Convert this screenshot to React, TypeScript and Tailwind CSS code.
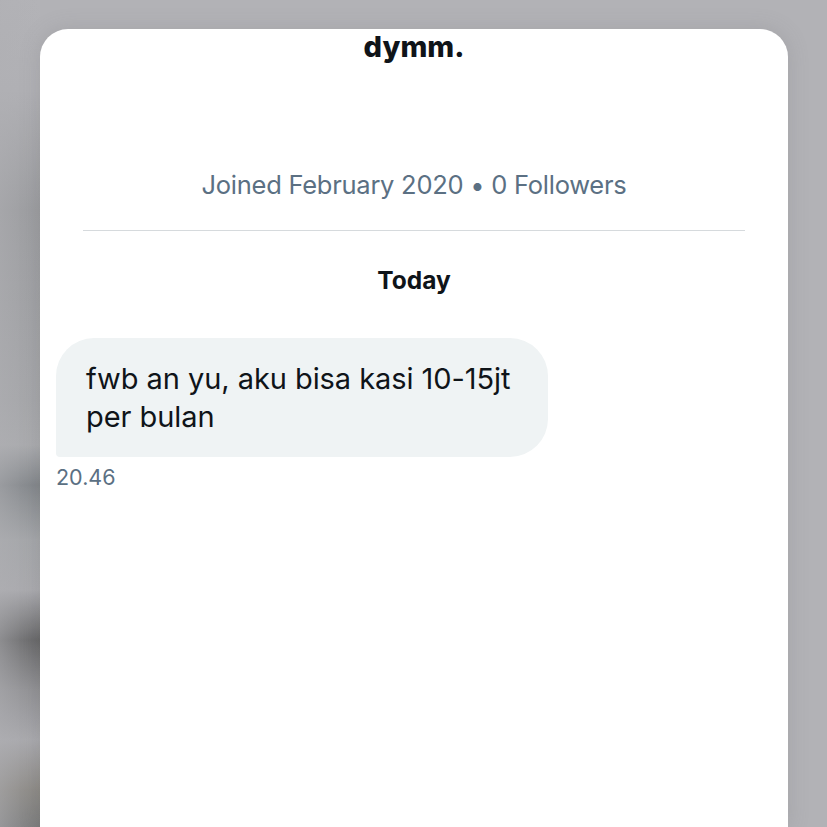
export default function App() {
  return (
    <div className="flex h-[827px] overflow-hidden bg-[#b2b2b6] pr-[39px] font-['Inter',sans-serif]">
      {/* Blurred backdrop showing on the left */}
      <div className="h-full w-[40px] shrink-0 bg-[linear-gradient(to_right,rgba(176,176,180,0.55),rgba(176,176,180,0)),linear-gradient(to_bottom,#b3b3b7_0px,#b0b0b4_90px,#9a9b9e_210px,#a4a5a8_400px,#a9aaad_445px,#7f8387_485px,#a3a5a8_540px,#a9a9ad_590px,#626263_640px,#8e8e91_690px,#a8a8ac_740px,#8a8782_790px,#787979_827px)]" />

      <div className="mt-[29px] flex h-[798px] flex-1 flex-col rounded-t-[28px] bg-white shadow-[0_0_20px_rgba(120,120,125,0.25)]">
        {/* Header */}
        <h1 className="text-center text-[29px] leading-[36px] font-extrabold text-[#0f1419]">dymm.</h1>
        <p className="mt-[102px] text-center text-[25.5px] leading-[36px] tracking-[-0.26px] text-[#5b7083]">
          Joined February 2020 • 0 Followers
        </p>
        <div className="mx-[43px] mt-[27px] h-px bg-[#d6dadd]" />
        <p className="mt-[31px] text-center text-[24.5px] leading-[36px] font-bold text-[#0f1419]">Today</p>

        {/* Message */}
        <div className="mt-[40px] ml-[16px] w-[492px] rounded-[38px] rounded-bl-[4px] bg-[#eff3f4] pt-[22px] pr-[30px] pb-[21px] pl-[30px] text-[29px] leading-[38px] tracking-[-0.06px] text-[#0f1419]">
          fwb an yu, aku bisa kasi 10-15jt per bulan
        </div>
        <p className="mt-[5px] ml-[16px] text-[21.5px] leading-[30px] text-[#5b7083]">20.46</p>
      </div>
    </div>
  );
}
